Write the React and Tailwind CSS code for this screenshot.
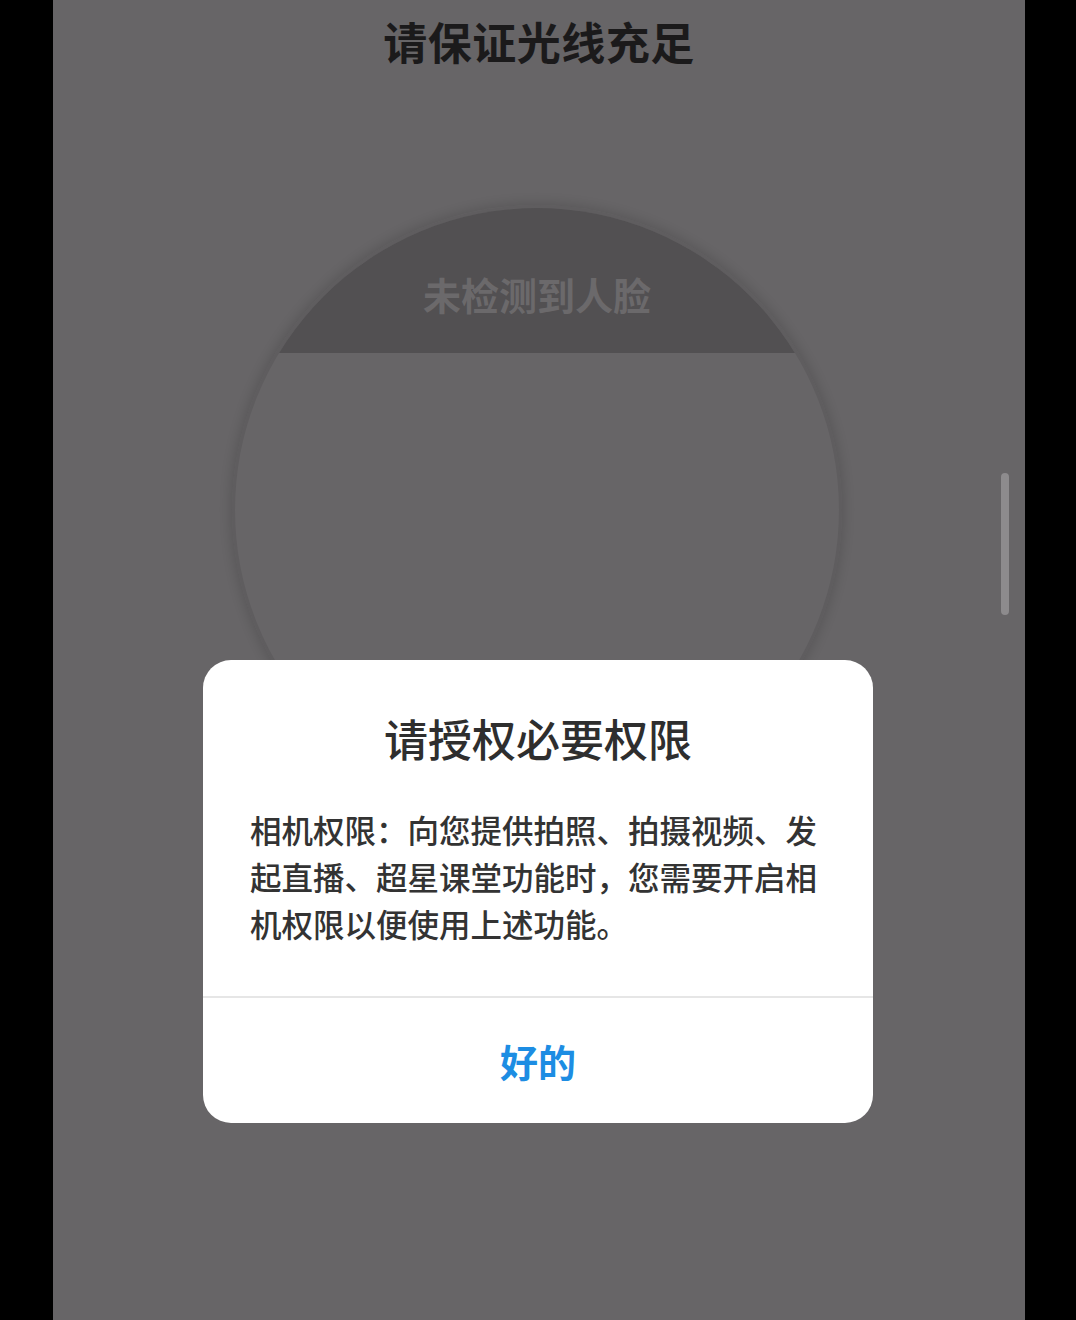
const cjk = { fontFamily: '"Noto Sans CJK SC", "Noto Sans", sans-serif' };

export default function App() {
  return (
    <div className="flex h-[1320px] w-[1076px] overflow-hidden bg-black" style={cjk}>
      <div className="w-[53px] shrink-0 bg-black" />
      <div className="relative flex w-[972px] shrink-0 flex-col bg-[#676567]">
        <h1 className="mt-[11px] h-[60px] text-center text-[44px] font-bold leading-[60px] tracking-[0.5px] text-[#1b1a1b]">
          请保证光线充足
        </h1>

        <FaceCircle />

        <div className="absolute left-[948px] top-[473px] h-[142px] w-[8px] rounded-full bg-[#8d8b8d]" />

        <PermissionDialog />
      </div>
      <div className="flex-1 bg-black" />
    </div>
  );
}

function FaceCircle() {
  return (
    <div className="ml-[179px] mt-[134px] h-[610px] w-[610px] overflow-hidden rounded-full border-[3px] border-[#5f5d5f] shadow-[0_0_12px_2px_rgba(0,0,0,0.14)]">
      <div className="flex h-[145px] justify-center bg-[#525052] pt-[62px]">
        <span className="text-[38px] font-bold leading-[48px] text-[#6b696b]">未检测到人脸</span>
      </div>
      <div className="flex-1" />
    </div>
  );
}

function PermissionDialog() {
  return (
    <div className="absolute left-[150px] top-[660px] flex h-[463px] w-[670px] flex-col overflow-hidden rounded-[28px] bg-white">
      <h2 className="pt-[48px] text-center text-[44px] font-medium leading-[60px] text-[#2e2e2e]">
        请授权必要权限
      </h2>
      <p className="mt-[38px] h-[190px] whitespace-nowrap pl-[47px] text-[31.5px] font-medium leading-[47px] text-[#333333]">
        相机权限：向您提供拍照、拍摄视频、发
        <br />
        起直播、超星课堂功能时，您需要开启相
        <br />
        机权限以便使用上述功能。
      </p>
      <div className="h-[2px] bg-[#e6e6e6]" />
      <button className="flex flex-1 items-center justify-center text-[38px] font-bold text-[#1d8de3]">
        好的
      </button>
    </div>
  );
}
